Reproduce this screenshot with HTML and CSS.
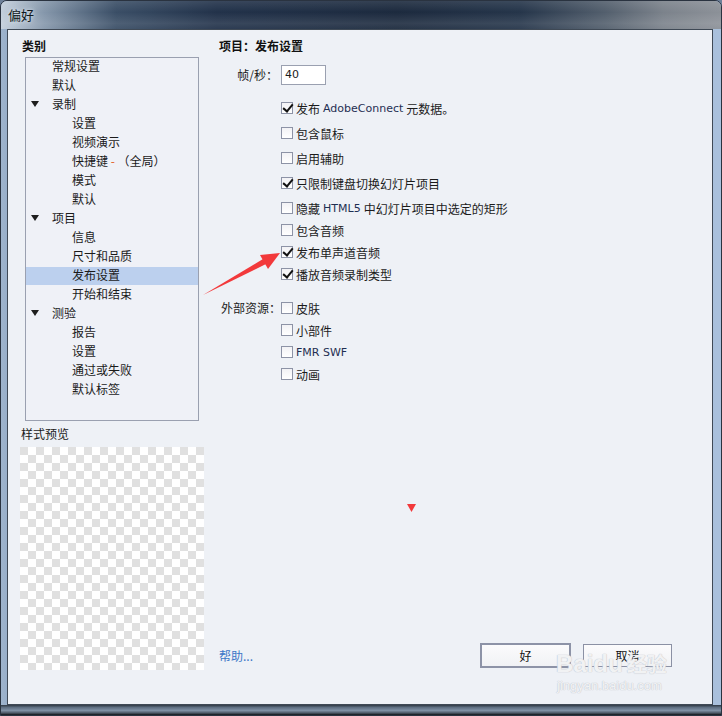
FILE: index.html
```html
<!DOCTYPE html>
<html lang="zh-CN">
<head>
<meta charset="utf-8">
<title>偏好</title>
<link rel="stylesheet" href="styles.css">
</head>
<body>
<div class="window">
  <div class="titlebar"><span class="title">偏好</span></div>
  <div class="frame">
    <div class="client">
      <div class="left">
        <div class="heading h-cat">类别</div>
        <div class="tree">
          <div class="row l0">常规设置</div>
          <div class="row l0">默认</div>
          <div class="row l0"><span class="tri"></span>录制</div>
          <div class="row l1">设置</div>
          <div class="row l1">视频演示</div>
          <div class="row l1">快捷键 <span class="dash">-</span> （全局）</div>
          <div class="row l1">模式</div>
          <div class="row l1">默认</div>
          <div class="row l0"><span class="tri"></span>项目</div>
          <div class="row l1">信息</div>
          <div class="row l1">尺寸和品质</div>
          <div class="row l1 sel">发布设置</div>
          <div class="row l1">开始和结束</div>
          <div class="row l0"><span class="tri"></span>测验</div>
          <div class="row l1">报告</div>
          <div class="row l1">设置</div>
          <div class="row l1">通过或失败</div>
          <div class="row l1">默认标签</div>
        </div>
        <div class="preview-label">样式预览</div>
        <div class="checker"></div>
      </div>
      <div class="right">
        <div class="heading">项目：发布设置</div>
        <div class="fps">
          <span class="fps-label">帧/秒：</span>
          <span class="input">40</span>
        </div>
        <div class="opts">
          <div class="opt wide"><span class="cb on"></span>发布 <span class="lat">AdobeConnect</span> 元数据。</div>
          <div class="opt wide"><span class="cb"></span>包含鼠标</div>
          <div class="opt wide"><span class="cb"></span>启用辅助</div>
          <div class="opt wide"><span class="cb on"></span>只限制键盘切换幻灯片项目</div>
          <div class="opt"><span class="cb"></span>隐藏 <span class="lat">HTML5</span> 中幻灯片项目中选定的矩形</div>
          <div class="opt"><span class="cb"></span>包含音频</div>
          <div class="opt"><span class="cb on"></span>发布单声道音频</div>
          <div class="opt"><span class="cb on"></span>播放音频录制类型</div>
        </div>
        <div class="ext">
          <div class="ext-label">外部资源：</div>
          <div class="ext-list">
            <div class="opt"><span class="cb"></span>皮肤</div>
            <div class="opt"><span class="cb"></span>小部件</div>
            <div class="opt"><span class="cb"></span><span class="lat tight">FMR SWF</span></div>
            <div class="opt"><span class="cb"></span>动画</div>
          </div>
        </div>
        <div class="spacer"></div>
        <div class="bottom">
          <span class="help">帮助...</span>
          <div class="buttons">
            <span class="btn default">好</span>
            <span class="btn">取消</span>
          </div>
        </div>
      </div>
    </div>
  </div>
  <div class="bottom-frame"></div>

  <svg class="overlay" width="722" height="716" viewBox="0 0 722 716">
    <polygon points="202,294 262,258 265,263" fill="#f2393b"/>
    <polygon points="279,252 259,254 267,268" fill="#f2393b"/>
    <polygon points="406,503 415,503 410.5,511" fill="#f2393b"/>
  </svg>

  <div class="watermark">
    <div class="wm-logo"><span>Bai</span><span class="paw">du</span><span class="wm-cn">经验</span></div>
    <div class="wm-url">jingyan.baidu.com</div>
  </div>
</div>
</body>
</html>
```

FILE: styles.css
```css
* { box-sizing: border-box; }
html, body { margin: 0; padding: 0; }
body {
  width: 722px;
  height: 716px;
  overflow: hidden;
  font-family: "Noto Sans CJK SC", "Liberation Sans", sans-serif;
  font-size: 12px;
  color: #1b1b1b;
  background: #6d8099;
}

.window {
  position: relative;
  width: 722px;
  height: 716px;
  display: flex;
  flex-direction: column;
  border-radius: 7px 7px 0 0;
  overflow: hidden;
  background: linear-gradient(to right, #9fb4cc 0, #8ea6c4 2%, #a6bbd5 50%, #a9c0dc 100%);
  border: 1px solid #2a3340;
}

.titlebar {
  height: 28px;
  flex: none;
  background:
    linear-gradient(to bottom, rgba(255,255,255,0.10) 0, rgba(255,255,255,0) 40%, rgba(255,255,255,0.10) 80%, rgba(255,255,255,0.05) 100%),
    linear-gradient(to right, #c3cfdc 0, #8597ab 6%, #3a4e66 16%, #22324a 30%, #1c2a3e 55%, #25354a 72%, #535f6d 84%, #7b828b 92%, #8c9198 100%);
  display: flex;
  align-items: center;
  padding-left: 7px;
}
.title {
  font-size: 13px;
  line-height: 16px;
  color: #101820;
  text-shadow: 0 0 6px rgba(220,230,240,0.9), 0 0 3px rgba(220,230,240,0.9);
}

.frame {
  flex: 1;
  display: flex;
  padding: 0 8px 0 6px;
}

.client {
  flex: 1;
  display: grid;
  grid-template-columns: 211px 1fr;
  background: #eef1f6;
  border: 1px solid #3f4955;
}

.bottom-frame {
  height: 10px;
  flex: none;
  background: linear-gradient(to bottom, #2f3843 0, #5f6f82 25%, #7f90a4 55%, #4d5866 80%, #101418 100%);
}

/* Left column */
.left {
  padding: 8px 0 0 12px;
  display: flex;
  flex-direction: column;
}
.heading {
  font-weight: bold;
  font-size: 12px;
  line-height: 16px;
  height: 16px;
  color: #111;
}
.h-cat { padding-left: 2px; }

.tree {
  margin: 3px 0 0 5px;
  width: 174px;
  height: 364px;
  border: 1px solid #9aa0b0;
  background: #eff1f7;
}
.row {
  height: 19px;
  line-height: 15px;
  position: relative;
  white-space: nowrap;
}
.l0 { padding-left: 26px; }
.l1 { padding-left: 46px; }
.row.sel { background: #bcd0ee; height: 18px; margin-bottom: 1px; line-height: 15px; }
.tri {
  position: absolute;
  left: 5px;
  top: 5px;
  width: 0;
  height: 0;
  border-left: 4px solid transparent;
  border-right: 4px solid transparent;
  border-top: 6px solid #1e1e1e;
}
.dash { color: #e25d1c; }

.preview-label {
  margin: 5px 0 0 1px;
  line-height: 16px;
  height: 16px;
}
.checker {
  margin-top: 5px;
  width: 184px;
  height: 223px;
  background: conic-gradient(#ffffff 25%, #e0e0e0 0 50%, #ffffff 0 75%, #e0e0e0 0);
  background-size: 16px 16px;
}

/* Right column */
.right {
  display: flex;
  flex-direction: column;
  padding: 8px 40px 36px 0;
}
.fps {
  display: flex;
  align-items: center;
  margin-top: 11px;
  height: 20px;
}
.fps-label {
  width: 62px;
  padding-right: 3px;
  text-align: right;
  line-height: 16px;
}
.input {
  width: 45px;
  height: 20px;
  border: 1px solid #9aa0b0;
  background: #fff;
  line-height: 18px;
  padding-left: 3px;
  font-size: 11px;
  font-family: "DejaVu Sans", sans-serif;
}

.opts {
  margin: 12px 0 0 62px;
}
.opt {
  display: flex;
  align-items: center;
  height: 22px;
  white-space: nowrap;
}
.opt.wide { margin-bottom: 3px; }
.lat {
  font-family: "DejaVu Sans", sans-serif;
  font-size: 11px;
  color: #1f2f52;
  padding: 0 3px;
}
.lat.tight { padding: 0; }
.cb {
  width: 12px;
  height: 12px;
  flex: none;
  border: 1px solid #8d93a6;
  background: linear-gradient(to bottom, #f2f2f5, #ffffff);
  margin-right: 3px;
  position: relative;
}
.cb.on::after {
  content: "";
  position: absolute;
  left: 3px;
  top: -1px;
  width: 4px;
  height: 8px;
  border-right: 2px solid #111;
  border-bottom: 2px solid #111;
  transform: rotate(40deg);
}

.ext {
  display: flex;
  margin-top: 12px;
}
.ext-label {
  width: 62px;
  padding-left: 2px;
  height: 22px;
  line-height: 22px;
  white-space: nowrap;
}

.spacer { flex: 1; }
.bottom {
  display: flex;
  align-items: center;
  justify-content: space-between;
  height: 25px;
}
.help {
  color: #3b77c7;
  line-height: 16px;
}
.buttons {
  display: flex;
  align-items: center;
  gap: 12px;
}
.btn {
  width: 89px;
  height: 23px;
  border: 1px solid #8b91a4;
  background: linear-gradient(to bottom, #fbfbfc, #f1f2f5);
  display: flex;
  align-items: center;
  justify-content: center;
  color: #111;
}
.btn.default {
  width: 91px;
  height: 25px;
  border: 2px solid #8d93a7;
}

.overlay {
  position: absolute;
  left: 0;
  top: 0;
  pointer-events: none;
}

.watermark {
  position: absolute;
  left: 555px;
  top: 648px;
  pointer-events: none;
  color: rgba(255,255,255,0.8);
  text-shadow: 0 0 1px #c0c4cc, 0 0 1px #c0c4cc;
}
.wm-logo {
  font-family: "Liberation Sans", sans-serif;
  font-weight: bold;
  font-size: 24px;
  line-height: 30px;
  display: flex;
  align-items: baseline;
}
.wm-cn {
  font-family: "Noto Sans CJK SC", sans-serif;
  font-size: 20px;
  margin-left: 4px;
}
.wm-url {
  font-family: "Liberation Sans", sans-serif;
  font-size: 13px;
  line-height: 14px;
  margin-left: 1px;
}
```
